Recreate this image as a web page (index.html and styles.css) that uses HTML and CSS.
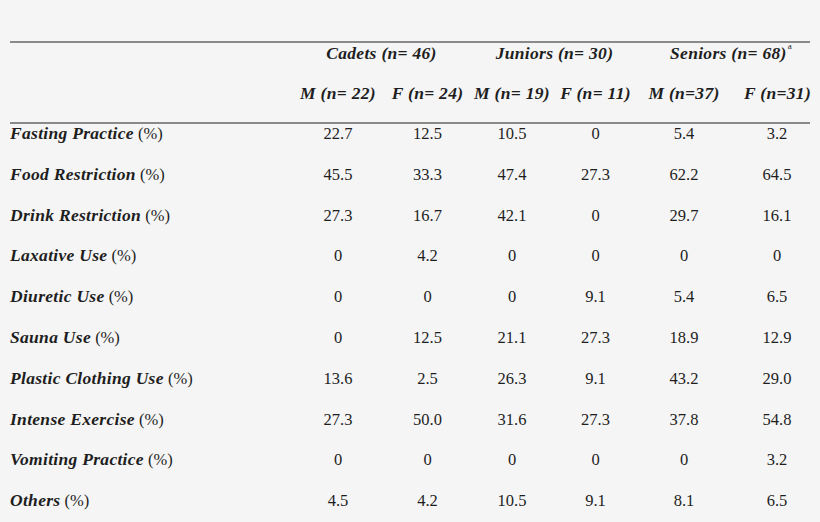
FILE: index.html
```html
<!DOCTYPE html>
<html>
<head>
<meta charset="utf-8">
<link rel="stylesheet" href="styles.css">
</head>
<body>
<table class="tbl">
  <colgroup>
    <col class="c-label">
    <col class="c-num"><col class="c-num2"><col class="c-num3"><col class="c-num4"><col class="c-num5"><col class="c-num6">
  </colgroup>
  <thead>
    <tr class="h1">
      <th></th>
      <th colspan="2">Cadets (n= 46)</th>
      <th colspan="2">Juniors (n= 30)</th>
      <th colspan="2" class="sen">Seniors (n= 68)<sup>a</sup></th>
    </tr>
    <tr class="h2">
      <th></th>
      <th>M (n= 22)</th>
      <th>F (n= 24)</th>
      <th>M (n= 19)</th>
      <th>F (n= 11)</th>
      <th>M (n=37)</th>
      <th class="last">F (n=31)</th>
    </tr>
  </thead>
  <tbody>
    <tr><td class="lbl"><b>Fasting Practice</b> (%)</td><td>22.7</td><td>12.5</td><td>10.5</td><td>0</td><td>5.4</td><td class="last">3.2</td></tr>
    <tr><td class="lbl"><b>Food Restriction</b> (%)</td><td>45.5</td><td>33.3</td><td>47.4</td><td>27.3</td><td>62.2</td><td class="last">64.5</td></tr>
    <tr><td class="lbl"><b>Drink Restriction</b> (%)</td><td>27.3</td><td>16.7</td><td>42.1</td><td>0</td><td>29.7</td><td class="last">16.1</td></tr>
    <tr><td class="lbl"><b>Laxative Use</b> (%)</td><td>0</td><td>4.2</td><td>0</td><td>0</td><td>0</td><td class="last">0</td></tr>
    <tr><td class="lbl"><b>Diuretic Use</b> (%)</td><td>0</td><td>0</td><td>0</td><td>9.1</td><td>5.4</td><td class="last">6.5</td></tr>
    <tr><td class="lbl"><b>Sauna Use</b> (%)</td><td>0</td><td>12.5</td><td>21.1</td><td>27.3</td><td>18.9</td><td class="last">12.9</td></tr>
    <tr><td class="lbl"><b>Plastic Clothing Use</b> (%)</td><td>13.6</td><td>2.5</td><td>26.3</td><td>9.1</td><td>43.2</td><td class="last">29.0</td></tr>
    <tr><td class="lbl"><b>Intense Exercise</b> (%)</td><td>27.3</td><td>50.0</td><td>31.6</td><td>27.3</td><td>37.8</td><td class="last">54.8</td></tr>
    <tr><td class="lbl"><b>Vomiting Practice</b> (%)</td><td>0</td><td>0</td><td>0</td><td>0</td><td>0</td><td class="last">3.2</td></tr>
    <tr><td class="lbl"><b>Others</b> (%)</td><td>4.5</td><td>4.2</td><td>10.5</td><td>9.1</td><td>8.1</td><td class="last">6.5</td></tr>
  </tbody>
</table>
</body>
</html>
```

FILE: styles.css
```css
html, body {
  margin: 0;
  padding: 0;
  background: #f5f5f5;
  width: 820px;
  height: 522px;
  overflow: hidden;
}
body {
  padding: 41px 10px 0 10px;
  box-sizing: border-box;
  font-family: "Liberation Serif", "Times New Roman", serif;
  font-size: 16.5px;
  color: #1e1e1e;
}
.tbl {
  width: 800px;
  border-collapse: collapse;
  table-layout: fixed;
  border-top: 2px solid #8a8a8a;
}
.c-label { width: 282px; }
.c-num { width: 92px; }
.c-num2 { width: 87px; }
.c-num3 { width: 82px; }
.c-num4 { width: 85px; }
.c-num5 { width: 92px; }
.c-num6 { width: 80px; }
th, td {
  padding: 0;
  text-align: center;
  white-space: nowrap;
  line-height: 20px;
  vertical-align: top;
}
th, td.lbl b {
  font-weight: bold;
  font-style: italic;
  font-size: 17.5px;
  letter-spacing: 0.3px;
}
td.lbl b {
  line-height: 12px;
}
.h1 th {
  height: 20px;
}
.h2 th {
  padding-top: 20px;
  height: 39px;
}
thead {
  border-bottom: 2px solid #8a8a8a;
}
.sen { padding-left: 14px; }
.last { padding-left: 14px; }
sup {
  font-size: 9px;
  font-weight: normal;
  font-style: normal;
  vertical-align: top;
  line-height: 10px;
  position: relative;
  top: -2px;
  margin-left: 1px;
}
td {
  padding-top: 0px;
  padding-bottom: 20.8px;
  height: 20px;
}
td.lbl {
  text-align: left;
}
```
